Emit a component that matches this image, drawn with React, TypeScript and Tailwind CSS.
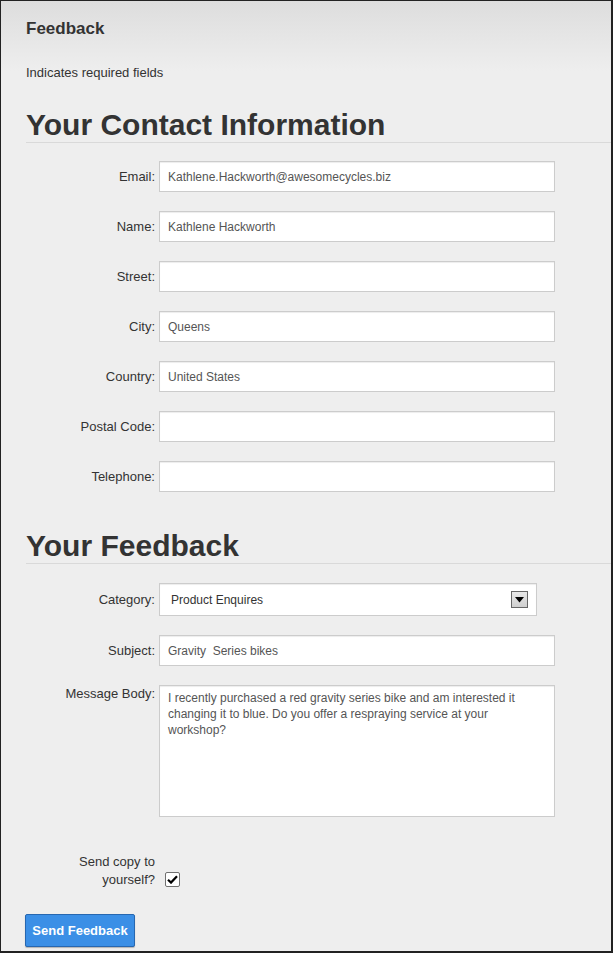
import { useState } from "react";

const contactFields = [
  { label: "Email:", value: "Kathlene.Hackworth@awesomecycles.biz" },
  { label: "Name:", value: "Kathlene Hackworth" },
  { label: "Street:", value: "" },
  { label: "City:", value: "Queens" },
  { label: "Country:", value: "United States" },
  { label: "Postal Code:", value: "" },
  { label: "Telephone:", value: "" },
];

const inputClass =
  "h-[31px] w-[396px] border border-[#cccccc] bg-white px-2 text-[12px] text-[#555555] shadow-[inset_0_1px_1px_rgba(0,0,0,0.075)] outline-none";

const FieldRow = ({ label, value }: { label: string; value: string }) => {
  const [text, setText] = useState(value);
  return (
    <div className="flex items-center">
      <label className="w-[158px] pr-1 text-right text-[13px] text-[#333333]">
        {label}
      </label>
      <input
        className={inputClass}
        value={text}
        onChange={(e) => setText(e.target.value)}
      />
    </div>
  );
};

const SectionHeading = ({ title, className }: { title: string; className: string }) => (
  <h2
    className={
      "ml-[25px] border-b border-[#d9d9d9] text-[30px] leading-[34px] font-bold text-[#333333] " +
      className
    }
  >
    {title}
  </h2>
);

const App = () => {
  const [sendCopy, setSendCopy] = useState(true);

  return (
    <div className="h-[953px] w-[613px] overflow-hidden border-t border-l border-r-2 border-b-2 border-[#222222] bg-[linear-gradient(to_bottom,#dddddd,#eeeeee_70px)] font-['Liberation_Sans',Arial,sans-serif]">
      <div className="pt-[18px] pl-[25px] text-[17px] leading-[20px] font-bold text-[#333333]">
        Feedback
      </div>
      <div className="mt-[26px] pl-[25px] text-[13px] leading-[16px] text-[#333333]">
        Indicates required fields
      </div>

      <SectionHeading title="Your Contact Information" className="mt-[27px]" />

      <div className="mt-[18px] flex flex-col gap-[19px]">
        {contactFields.map((f) => (
          <FieldRow key={f.label} label={f.label} value={f.value} />
        ))}
      </div>

      <SectionHeading title="Your Feedback" className="mt-[37px]" />

      <div className="mt-[19px] flex flex-col gap-[19px]">
        <div className="flex items-center">
          <label className="w-[158px] pr-1 text-right text-[13px] text-[#333333]">
            Category:
          </label>
          <div className="flex h-[33px] w-[378px] items-center justify-between border border-[#cccccc] bg-white pr-[8px] pl-[11px] text-[12px] text-[#333333] shadow-[inset_0_1px_1px_rgba(0,0,0,0.075)]">
            <span>Product Enquires</span>
            <span className="flex h-[17px] w-[17px] items-center justify-center border border-[#666666] bg-[linear-gradient(to_bottom,#e8e8e8,#cfcfcf)]">
              <svg width="9" height="6" viewBox="0 0 9 6">
                <path d="M0 0 L9 0 L4.5 5.5 Z" fill="#000000" />
              </svg>
            </span>
          </div>
        </div>

        <FieldRow label="Subject:" value="Gravity  Series bikes" />

        <div className="flex items-start">
          <label className="w-[158px] pt-[1px] pr-1 text-right text-[13px] leading-[16px] text-[#333333]">
            Message Body:
          </label>
          <textarea
            className="h-[132px] w-[396px] resize-none overflow-hidden border border-[#cccccc] bg-white px-2 pt-[4px] text-[12px] leading-[16px] text-[#555555] shadow-[inset_0_1px_1px_rgba(0,0,0,0.075)] outline-none"
            defaultValue="I recently purchased a red gravity series bike and am interested it changing it to blue. Do you offer a respraying service at your workshop?"
          />
        </div>
      </div>

      <div className="mt-[36px] flex items-end">
        <label className="w-[158px] pr-1 text-right text-[13px] leading-[18px] text-[#333333]">
          Send copy to
          <br />
          yourself?
        </label>
        <button
          className="mb-[2px] ml-[6px] flex h-[15px] w-[15px] items-center justify-center rounded-[2px] border border-[#707070] bg-white"
          onClick={() => setSendCopy(!sendCopy)}
        >
          {sendCopy && (
            <svg width="11" height="9" viewBox="0 0 11 9">
              <path
                d="M1 4.8 L4 7.6 L10 1.2"
                fill="none"
                stroke="#000000"
                strokeWidth="2.2"
              />
            </svg>
          )}
        </button>
      </div>

      <button className="mt-[25px] ml-[24px] h-[33px] w-[110px] rounded-[2px] border border-[#2767b0] bg-[#3b8fe6] text-[13px] font-bold text-white shadow-[0_1px_1px_rgba(0,0,0,0.25)]">
        Send Feedback
      </button>
    </div>
  );
};

export default App;
